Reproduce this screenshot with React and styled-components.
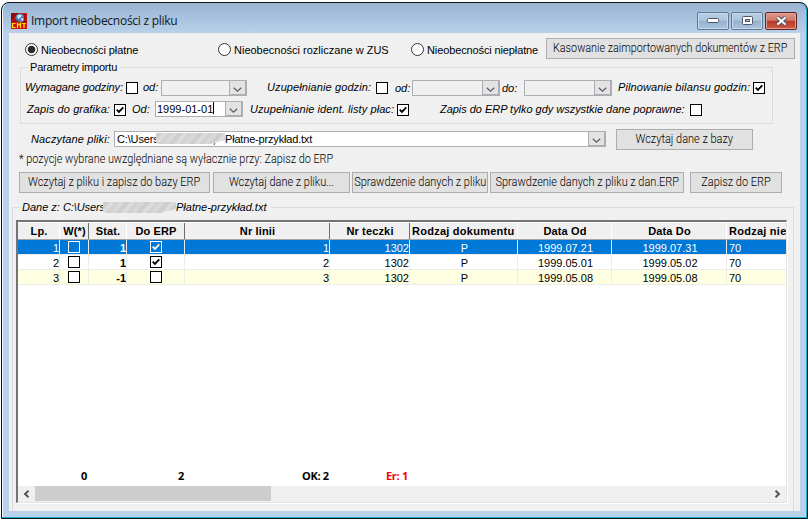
import React from 'react';
import styled, { createGlobalStyle, css } from 'styled-components';

const Global = createGlobalStyle`
  * { box-sizing: border-box; }
  body { margin: 0; background: #fff; overflow: hidden; }
`;

const Desktop = styled.div`
  width: 808px;
  height: 520px;
  padding: 2px 0 1px 1px;
  background: #fff;
`;
const Frame = styled.div`
  width: 807px;
  height: 517px;
  border: 1px solid #111;
  border-radius: 8px 8px 0 0;
  background: #1cb4d4;
  padding: 0 1px 1px 0;
  overflow: hidden;
`;
const Chrome = styled.div`
  height: 514px;
  display: flex;
  flex-direction: column;
  padding: 1px 6px 6px 6px;
  border-left: 1px solid #f4f9ff;
  border-radius: 7px 7px 0 0;
  background: linear-gradient(#98b4d1 0, #a5bfdc 12px, #b9d1ea 31px, #b9d1ea 100%);
  overflow: hidden;
`;
const TitleBar = styled.header`
  height: 29px;
  flex: none;
  display: flex;
  align-items: center;
  padding: 5px 3px 0 2px;
`;
const Title = styled.h1`
  margin: 0 auto 0 4px;
  font: 400 12px/18px "Open Sans", sans-serif;
  letter-spacing: -0.26px;
  color: #101820;
  white-space: nowrap;
`;
const CaptionButtons = styled.div`
  display: flex;
  gap: 2px;
  margin-top: -1px;
`;
const CaptionButton = styled.button`
  width: 32px;
  height: 18px;
  padding: 0;
  display: grid;
  place-items: center;
  border: 1px solid ${p => (p.$close ? '#5c2523' : '#647990')};
  border-radius: 2px;
  box-shadow: inset 0 0 0 1px ${p => (p.$close ? '#e0a093' : '#c6d9ec')};
  background: ${p => (p.$close
    ? 'linear-gradient(#dc9b8c 0, #cf7767 46%, #b8392a 50%, #cc5a45 100%)'
    : 'linear-gradient(#b8cee4 0, #adc4db 46%, #95b1ce 50%, #aac4df 100%)')};
`;

const Client = styled.main`
  height: 478px;
  flex: none;
  width: 791px;
  background: #f0f0f0;
  padding-top: 5px;
  overflow: hidden;
  color: #000;
  font: 11px/13px "Liberation Sans", Arial, sans-serif;
`;

const Row = styled.div`
  display: flex;
  align-items: flex-start;
  height: ${p => p.$h}px;
  padding-left: ${p => p.$pl || 0}px;
`;
const Label = styled.span`
  flex: none;
  width: ${p => p.$w}px;
  margin-top: ${p => (p.$mt ?? 0)}px;
  margin-left: ${p => p.$ml || 0}px;
  white-space: nowrap;
  letter-spacing: ${p => p.$ls || 0}px;
  ${p => p.$italic && css`font-style: italic;`}
`;
const Radio = styled.span`
  flex: none;
  width: 13px;
  height: 13px;
  margin: 5px 3px 0 ${p => p.$ml || 0}px;
  border: 1px solid #333;
  border-radius: 50%;
  background: ${p => (p.$on ? 'radial-gradient(circle, #2b2b2b 3.4px, #fff 4.2px)' : '#fff')};
`;
const ButtonFrame = styled.button`
  flex: none;
  width: ${p => p.$w}px;
  height: 21px;
  margin-left: ${p => p.$ml || 0}px;
  padding: 0;
  border: 1px solid #adadad;
  background: #e1e1e1;
  color: #000;
  font: 300 12px/19px Roboto, sans-serif;
  white-space: nowrap;
  display: flex;
  justify-content: center;
`;
const ButtonText = styled.span`
  flex: none;
  transform: scaleX(${p => p.$sx});
`;
const Params = styled.section`
  width: 753px;
  height: 57px;
  margin: 8px 0 0 11px;
  border: 1px solid #dcdcdc;
`;
const Legend = styled.div`
  width: max-content;
  height: 13px;
  margin: -7px 0 0 ${p => p.$ml}px;
  padding: 0 2px;
  background: #f0f0f0;
  letter-spacing: ${p => p.$ls || 0}px;
  white-space: nowrap;
`;
const Box = styled.span`
  flex: none;
  width: 12px;
  height: 12px;
  margin-left: ${p => p.$ml || 0}px;
  margin-top: ${p => p.$mt || 0}px;
  border: 1px solid ${p => (p.$inv ? '#fff' : '#000')};
  background: ${p => (p.$inv ? 'transparent' : '#fff')};
  color: ${p => (p.$inv ? '#fff' : '#000')};
  display: grid;
  place-items: center;
`;
const Combo = styled.span`
  flex: none;
  width: ${p => p.$w}px;
  height: 16px;
  margin-left: ${p => p.$ml || 0}px;
  margin-top: ${p => p.$mt || 0}px;
  border: 1px solid #adaeb3;
  background: ${p => (p.$active ? '#fff' : '#f0f0f0')};
  display: flex;
  overflow: hidden;
`;
const ComboValue = styled.span`
  flex: 1;
  min-width: 0;
  display: flex;
  padding-left: ${p => p.$pl ?? 1}px;
  white-space: nowrap;
  line-height: 14px;
`;
const ComboArrow = styled.span`
  width: 17px;
  display: grid;
  justify-items: center;
  align-items: end;
  padding-bottom: 1px;
  border: 1px solid #adaeb3;
  border-top-width: 0;
  background: #e3e3e3;
`;
const Caret = styled.i`
  width: 1px;
  height: 12px;
  background: #000;
`;
const Note = styled.p`
  width: max-content;
  height: 20px;
  margin: 2px 0 0 10px;
  font: 300 12px/14px Roboto, sans-serif;
  white-space: nowrap;
  transform: scaleX(0.905);
  transform-origin: left;
`;
const ButtonOffset = styled.div`
  margin: 5px 0 0 10px;
`;
const Actions = styled.div`
  display: flex;
  margin-left: 10px;
`;
const Group = styled.section`
  width: 782px;
  height: 330px;
  margin: 14px 0 0 3px;
  border: 1px solid #dcdcdc;
  border-bottom: 0;
`;
const GroupTitle = styled.div`
  display: flex;
  width: max-content;
  height: 14px;
  margin: -7px 0 0 7px;
  padding: 0 2px;
  font-style: italic;
  background: #f0f0f0;
  white-space: nowrap;
`;
const Grid = styled.div`
  width: 771px;
  height: 283px;
  margin: 5px 0 0 3px;
  border: 0 solid #e3e3e3;
  border-width: 2px 1px 1px 2px;
  border-top-color: #747474;
  border-left-color: #747474;
  box-shadow: 1px 1px 0 #fff;
  background: #fff;
  display: flex;
  flex-direction: column;
`;
const columns = '42px 29px 38px 58px 145px 80px 108px 94px 115px 59px';
const Head = styled.div`
  height: 18px;
  flex: none;
  display: grid;
  grid-template-columns: ${columns};
  background: #f0f0f0;
  border-top: 1px solid #fff;
  border-bottom: 1px solid #a5a5a5;
  font-weight: 700;
  overflow: hidden;
`;
const HeadCell = styled.div`
  padding: 2px 0 0 ${p => (p.$clip ? 2 : 1)}px;
  text-align: ${p => (p.$clip ? 'left' : 'center')};
  letter-spacing: ${p => (p.$clip ? 0.25 : 0.15)}px;
  white-space: nowrap;
  overflow: hidden;
  border-right: 1px solid ${p => (p.$dark ? '#6e6e6e' : '#fff')};
  &:last-child { border-right: 0; }
`;
const BodyRow = styled.div`
  height: 15px;
  flex: none;
  display: grid;
  grid-template-columns: ${columns};
  overflow: hidden;
  border-bottom: 1px solid #ececec;
  background: ${p => (p.$selected ? '#0078d7' : p.$alt ? '#ffffe1' : '#fff')};
  color: ${p => (p.$selected ? '#fff' : '#000')};
`;
const Cell = styled.div`
  height: 14px;
  padding: 1px 0 0 ${p => (p.$align === 'right' ? 0 : p.$pl ?? 2)}px;
  border-right: 1px solid #ececec;
  display: flex;
  justify-content: ${p => (p.$align === 'center' ? 'center' : p.$align === 'left' ? 'flex-start' : 'flex-end')};
  font-weight: ${p => (p.$bold ? 700 : 400)};
  line-height: 14px;
  white-space: nowrap;
  &:last-child { border-right: 0; }
`;
const Totals = styled.div`
  margin-top: auto;
  height: 17px;
  flex: none;
  display: flex;
  padding-left: 63px;
  font: 700 11px/14px "Open Sans", sans-serif;
`;
const Total = styled.span`
  width: ${p => p.$w}px;
  letter-spacing: -0.3px;
  color: ${p => (p.$error ? '#f00' : '#000')};
`;
const Scroll = styled.div`
  height: 16px;
  flex: none;
  display: flex;
  background: #f0f0f0;
  padding-bottom: 1px;
`;
const ScrollArrow = styled.span`
  width: 17px;
  display: grid;
  place-items: center;
  margin-left: ${p => (p.$end ? 'auto' : '0')};
`;
const Thumb = styled.span`
  width: 236px;
  background: #cdcdcd;
`;

const Logo = () => (
  <svg width="16" height="16" viewBox="0 0 16 16">
    <rect width="16" height="16" fill="#d40f12" />
    <path d="M0 9V0h9L4 4z" fill="#8e0b10" />
    <path d="M14 1v8M10 9h6M2 9l3-2" stroke="#7a0a0c" />
    <circle cx="8.8" cy="4.8" r="4.3" fill="#4f86b8" />
    <path d="M6 2.5l3-1 2 1-2 2.5-2 1zM10 5l3 1-2 3z" fill="#cfe4f1" />
    <path d="M5 6l3 3H6z" fill="#17395e" />
    <path d="M4.5 10.5h-3v4h3M6.5 15v-4.5L8 12l1.5-1.5V15M11 10.5h4M13 10.5V15" fill="none" stroke="#ffe600" strokeWidth="1.2" />
  </svg>
);
const Tick = () => (
  <svg width="10" height="10" viewBox="0 0 10 10">
    <path d="M1.7 4.6L3.9 6.9 8.3 2.3" fill="none" stroke="currentColor" strokeWidth="1.8" />
  </svg>
);
const Chevron = () => (
  <svg width="9" height="6" viewBox="0 0 9 6">
    <path d="M0.8 0.8l3.7 3.4 3.7-3.4" fill="none" stroke="#5c5c5c" strokeWidth="1.2" />
  </svg>
);
const Smear = styled.svg`
  flex: none;
  display: block;
`;
const SmudgedPath = ({ w, id, mark }) => (
  <Smear width={w} height="14" viewBox={`0 0 ${w} 14`}>
    <defs>
      <linearGradient id={`${id}-g`} gradientUnits="userSpaceOnUse" x1="0" y1="0" x2="12" y2="10" spreadMethod="repeat">
        <stop offset="0" stopColor="#dadada" />
        <stop offset="0.25" stopColor="#cacaca" />
        <stop offset="0.5" stopColor="#e0e0e0" />
        <stop offset="0.7" stopColor="#d0d0d0" />
        <stop offset="1" stopColor="#dadada" />
      </linearGradient>
    </defs>
    <path d={`M0 1H${w}V8L${w - 8} 10 ${w - 14} 12H2L0 10z`} fill={`url(#${id}-g)`} />
    {mark && <path d={`M${w - 10} 11l-1 2`} stroke="#555" />}
  </Smear>
);

const Button = ({ children, sx = 0.915, ...rest }) => (
  <ButtonFrame {...rest}><ButtonText $sx={sx}>{children}</ButtonText></ButtonFrame>
);
const Check = ({ on, ...rest }) => <Box {...rest}>{on && <Tick />}</Box>;
const Select = ({ children, pl, ...rest }) => (
  <Combo {...rest}>
    <ComboValue $pl={pl}>{children}</ComboValue>
    <ComboArrow><Chevron /></ComboArrow>
  </Combo>
);

const heads = [
  ['Lp.'], ['W(*)', 1], ['Stat.'], ['Do ERP', 1], ['Nr linii', 1],
  ['Nr teczki', 1], ['Rodzaj dokumentu'], ['Data Od'], ['Data Do'], ['Rodzaj nieobecności'],
];
const rows = [
  { lp: 1, stat: '1', erp: true, from: '1999.07.21', to: '1999.07.31' },
  { lp: 2, stat: '1', erp: true, from: '1999.05.01', to: '1999.05.02' },
  { lp: 3, stat: '-1', erp: false, from: '1999.05.08', to: '1999.05.08' },
];

export default function App() {
  return (
    <Desktop>
      <Global />
      <Frame>
        <Chrome>
          <TitleBar>
            <Logo />
            <Title>Import nieobecności z pliku</Title>
            <CaptionButtons>
              <CaptionButton>
                <svg width="12" height="6"><rect x="0.5" y="0.5" width="11" height="4" rx="1" fill="#fff" stroke="#535666" /></svg>
              </CaptionButton>
              <CaptionButton>
                <svg width="11" height="9"><rect x="0.5" y="0.5" width="10" height="8" rx="1" fill="#fff" stroke="#535666" /><rect x="3.5" y="3.5" width="4" height="2" fill="#a2bbd4" stroke="#535666" /></svg>
              </CaptionButton>
              <CaptionButton $close>
                <svg width="13" height="10" viewBox="0 0 13 10">
                  <path d="M2.5 1.5l8 7M10.5 1.5l-8 7" stroke="#535666" strokeWidth="4.2" />
                  <path d="M2.5 1.5l8 7M10.5 1.5l-8 7" stroke="#fff" strokeWidth="2.2" />
                </svg>
              </CaptionButton>
            </CaptionButtons>
          </TitleBar>
          <Client>
            <Row $h={21} $pl={16}>
              <Radio $on />
              <Label $w={177} $mt={6} $ls={-0.1}>Nieobecności płatne</Label>
              <Radio />
              <Label $w={177} $mt={6}>Nieobecności rozliczane w ZUS</Label>
              <Radio />
              <Label $w={119} $mt={6} $ls={-0.12}>Nieobecności niepłatne</Label>
              <Button $w={249} sx={0.9}>Kasowanie zaimportowanych dokumentów z ERP</Button>
            </Row>
            <Params>
              <Legend $ml={7} $ls={-0.2}>Parametry importu</Legend>
              <Row $h={20} $pl={4}>
                <Label $italic $w={98} $mt={7} $ls={-0.1}>Wymagane godziny:</Label>
                <Check $ml={3} $mt={8} />
                <Label $italic $w={15} $mt={7} $ml={5}>od:</Label>
                <Select $w={86} $ml={3} $mt={6} />
                <Label $italic $w={104} $mt={7} $ml={20} $ls={0.1}>Uzupełnianie godzin:</Label>
                <Check $ml={5} $mt={8} />
                <Label $italic $w={15} $mt={8} $ml={7}>od:</Label>
                <Select $w={88} $ml={2} $mt={6} />
                <Label $italic $w={15} $mt={8} $ml={2}>do:</Label>
                <Select $w={88} $ml={7} $mt={6} />
                <Label $italic $w={132} $mt={7} $ml={6} $ls={0.1}>Pilnowanie bilansu godzin:</Label>
                <Check on $ml={3} $mt={8} />
              </Row>
              <Row $h={24} $pl={6}>
                <Label $italic $w={83} $mt={9} $ls={0.1}>Zapis do grafika:</Label>
                <Check on $ml={4} $mt={10} />
                <Label $italic $w={17} $mt={9} $ml={6}>Od:</Label>
                <Select $active $w={88} $ml={6} $mt={7}>1999-01-01<Caret /></Select>
                <Label $italic $w={144} $mt={9} $ml={7} $ls={0.07}>Uzupełnianie ident. listy płac:</Label>
                <Check on $ml={3} $mt={10} />
                <Label $italic $w={245} $mt={9} $ml={31} $ls={-0.03}>Zapis do ERP tylko gdy wszystkie dane poprawne:</Label>
                <Check $ml={5} $mt={10} />
              </Row>
            </Params>
            <Row $h={26} $pl={22}>
              <Label $italic $w={79} $mt={9} $ls={0.12}>Naczytane pliki:</Label>
              <Select $active pl={2} $w={492} $ml={4} $mt={7}>
                <Label $w={39} $ls={-0.15}>C:\Users</Label>
                <SmudgedPath w={69} id="smear-combo" mark />
                <Label $w={90} $ls={-0.18}>Płatne-przykład.txt</Label>
              </Select>
              <ButtonOffset><Button $w={137}>Wczytaj dane z bazy</Button></ButtonOffset>
            </Row>
            <Note>* pozycje wybrane uwzględniane są wyłacznie przy: Zapisz do ERP</Note>
            <Actions>
              <Button $w={191}>Wczytaj z pliku i zapisz do bazy ERP</Button>
              <Button $w={137} $ml={3}>Wczytaj dane z pliku...</Button>
              <Button $w={136} $ml={2}>Sprawdzenie danych z pliku</Button>
              <Button $w={194} $ml={2}>Sprawdzenie danych z pliku z dan.ERP</Button>
              <Button $w={92} $ml={6}>Zapisz do ERP</Button>
            </Actions>
            <Group>
              <GroupTitle>
                <Label $w={41}>Dane z:</Label>
                <Label $w={40} $ls={-0.1}>C:\Users</Label>
                <SmudgedPath w={73} id="smear-group" />
                <Label $w={93}>Płatne-przykład.txt</Label>
              </GroupTitle>
              <Grid>
                <Head>
                  {heads.map(([t, dark], i) => (
                    <HeadCell key={t} $dark={dark} $clip={i === 9 || i === 6}>{t}</HeadCell>
                  ))}
                </Head>
                {rows.map(r => {
                  const selected = r.lp === 1;
                  return (
                    <BodyRow key={r.lp} $selected={selected} $alt={r.lp === 3}>
                      <Cell>{r.lp}</Cell>
                      <Cell $align="center" $pl={0}><Check $inv={selected} /></Cell>
                      <Cell $bold>{r.stat}</Cell>
                      <Cell $align="center" $pl={0}><Check on={r.erp} $inv={selected} /></Cell>
                      <Cell>{r.lp}</Cell>
                      <Cell>1302</Cell>
                      <Cell $align="center">P</Cell>
                      <Cell $align="center">{r.from}</Cell>
                      <Cell $align="center">{r.to}</Cell>
                      <Cell $align="left">70</Cell>
                    </BodyRow>
                  );
                })}
                <Totals>
                  <Total $w={97}>0</Total>
                  <Total $w={124}>2</Total>
                  <Total $w={84}>OK: 2</Total>
                  <Total $error>Er: 1</Total>
                </Totals>
                <Scroll>
                  <ScrollArrow><svg width="7" height="8"><path d="M5.5 0.7L2 4l3.5 3.3" fill="none" stroke="#505050" strokeWidth="1.9" /></svg></ScrollArrow>
                  <Thumb />
                  <ScrollArrow $end><svg width="7" height="8"><path d="M1.5 0.7L5 4 1.5 7.3" fill="none" stroke="#505050" strokeWidth="1.9" /></svg></ScrollArrow>
                </Scroll>
              </Grid>
            </Group>
          </Client>
        </Chrome>
      </Frame>
    </Desktop>
  );
}
